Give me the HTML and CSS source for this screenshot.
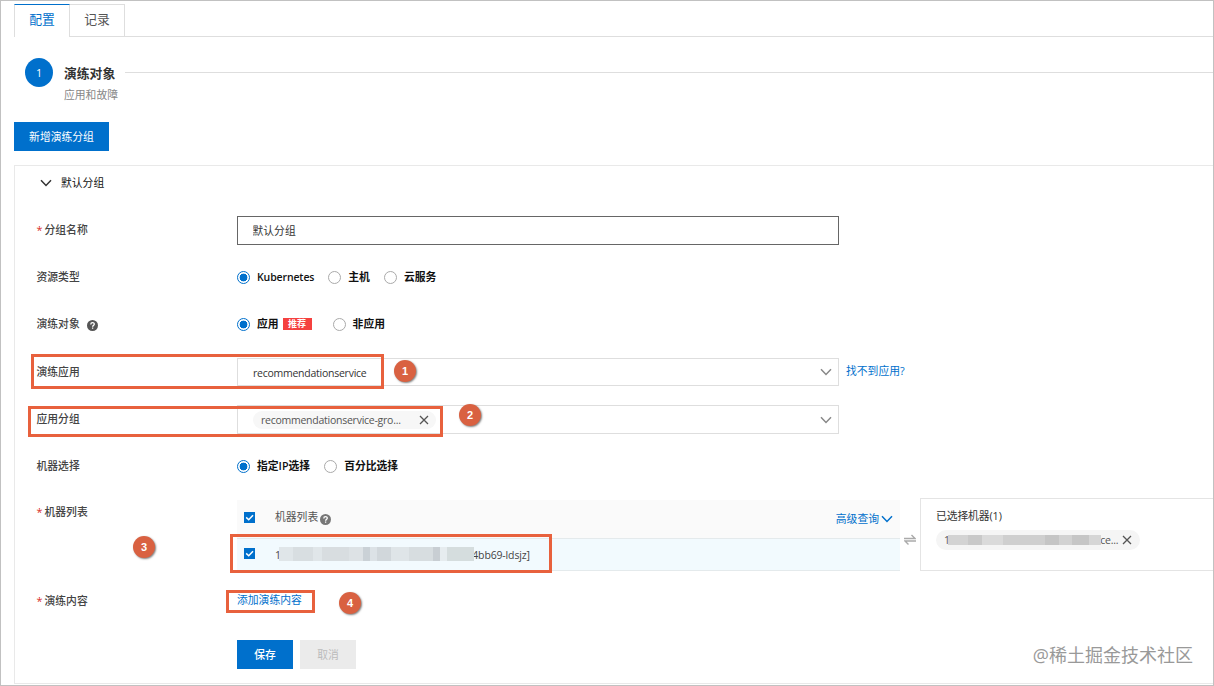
FILE: index.html
```html
<!DOCTYPE html>
<html lang="zh-CN">
<head>
    <meta charset="UTF-8">
    <meta name="viewport" content="width=device-width, initial-scale=1.0">
    <title>演练配置</title>
    <link rel="stylesheet" href="styles.css">
</head>
<body>
    <div class="page">
        <div class="tabs">
            <div class="tab active">配置</div>
            <div class="tab">记录</div>
            <div class="tabs-rest"></div>
        </div>

        <div class="step">
            <div class="step-number">1</div>
            <div class="step-body">
                <div class="step-head">
                    <span class="step-title">演练对象</span>
                    <span class="step-line"></span>
                </div>
                <div class="step-desc">应用和故障</div>
            </div>
        </div>

        <button type="button" class="btn btn-primary btn-add">新增演练分组</button>

        <div class="panel">
            <div class="panel-header">
                <svg class="arrow" width="12" height="8" viewBox="0 0 12 8"><path d="M1 1.2 6 6.4 11 1.2" /></svg>
                <span>默认分组</span>
            </div>

            <form>
                <div class="form-row">
                    <div class="label"><i>*</i>分组名称</div>
                    <input type="text" class="text-input" value="默认分组">
                </div>
                <div class="form-row">
                    <div class="label">资源类型</div>
                    <div class="radios">
                        <span class="radio checked"></span><b class="latin">Kubernetes</b>
                        <span class="radio"></span><b>主机</b>
                        <span class="radio"></span><b>云服务</b>
                    </div>
                </div>
                <div class="form-row">
                    <div class="label">演练对象
                        <svg class="help" width="11" height="11" viewBox="0 0 11 11"><circle cx="5.5" cy="5.5" r="5.5" /><path d="M3.8 4.4C3.8 2.1 7.3 2.2 7.3 4.3 7.3 5.4 5.6 5.4 5.6 6.7M5.6 7.6V8.8" /></svg>
                    </div>
                    <div class="radios">
                        <span class="radio checked"></span><b class="with-tag">应用</b><span class="tag">推荐</span>
                        <span class="radio"></span><b>非应用</b>
                    </div>
                </div>
                <div class="form-row row-app">
                    <div class="label">演练应用</div>
                    <div class="select select-app">
                        <span class="latin">recommendationservice</span>
                        <svg class="arrow" width="12" height="8" viewBox="0 0 12 8"><path d="M1 1.2 6 6.4 11 1.2" /></svg>
                    </div>
                    <a class="link">找不到应用?</a>
                </div>
                <div class="form-row">
                    <div class="label">应用分组</div>
                    <div class="select">
                        <span class="chip latin">recommendationservice-gro...
                            <svg class="close" width="10" height="10" viewBox="0 0 10 10"><path d="M1 1 9 9M9 1 1 9" /></svg>
                        </span>
                        <svg class="arrow" width="12" height="8" viewBox="0 0 12 8"><path d="M1 1.2 6 6.4 11 1.2" /></svg>
                    </div>
                </div>
                <div class="form-row row-choice">
                    <div class="label">机器选择</div>
                    <div class="radios">
                        <span class="radio checked"></span><b>指定IP选择</b>
                        <span class="radio"></span><b>百分比选择</b>
                    </div>
                </div>
                <div class="form-row row-machines">
                    <div class="label"><i>*</i>机器列表</div>
                    <div class="machine-list">
                        <div class="machine-head">
                            <svg class="checkbox" width="11" height="11" viewBox="0 0 11 11"><rect width="11" height="11" /><path d="M2.2 5.4 4.7 7.8 9 3.2" /></svg>
                            <span>机器列表</span>
                            <svg class="help" width="11" height="11" viewBox="0 0 11 11"><circle cx="5.5" cy="5.5" r="5.5" /><path d="M3.8 4.4C3.8 2.1 7.3 2.2 7.3 4.3 7.3 5.4 5.6 5.4 5.6 6.7M5.6 7.6V8.8" /></svg>
                            <a class="link advanced">高级查询
                                <svg class="arrow" width="12" height="8" viewBox="0 0 12 8"><path d="M1 1.2 6 6.4 11 1.2" /></svg>
                            </a>
                        </div>
                        <div class="machine-item">
                            <svg class="checkbox" width="11" height="11" viewBox="0 0 11 11"><rect width="11" height="11" /><path d="M2.2 5.4 4.7 7.8 9 3.2" /></svg>
                            <span class="latin">1</span>
                            <span class="mask mask-long"></span>
                            <span class="latin pod">4bb69-ldsjz]</span>
                        </div>
                    </div>
                    <svg class="swap" width="12" height="12" viewBox="0 0 12 12"><path d="M0 4.5H11L7.5 1M12 7H1L4.5 10.5" /></svg>
                    <div class="selected">
                        <div class="selected-title">已选择机器(1)</div>
                        <div class="selected-chip latin">
                            <span>1</span>
                            <span class="mask mask-short"></span>
                            <span>ce...</span>
                            <svg class="close" width="10" height="10" viewBox="0 0 10 10"><path d="M1 1 9 9M9 1 1 9" /></svg>
                        </div>
                    </div>
                </div>
                <div class="form-row row-content">
                    <div class="label"><i>*</i>演练内容</div>
                    <a class="link">添加演练内容</a>
                </div>
                <div class="actions">
                    <button type="button" class="btn btn-primary">保存</button>
                    <button type="button" class="btn btn-disabled" disabled>取消</button>
                </div>
            </form>
        </div>

        <!-- annotations over the form -->
        <div class="mark mark-1"></div>
        <div class="mark mark-2"></div>
        <div class="mark mark-3"></div>
        <div class="mark mark-4"></div>
        <div class="badge badge-1">1</div>
        <div class="badge badge-2">2</div>
        <div class="badge badge-3">3</div>
        <div class="badge badge-4">4</div>
        <div class="watermark">@稀土掘金技术社区</div>
    </div>
</body>
</html>
```
FILE: styles.css
```css
* {
    box-sizing: border-box;
}
body {
    margin: 0;
    font-family: "Open Sans", "Noto Sans CJK SC", sans-serif;
    font-size: 10.8px;
    line-height: 16px;
    color: #333;
    background-color: #fff;
}
svg {
    fill: none;
    flex: none;
}
.page {
    position: relative;
    width: 1214px;
    height: 686px;
    padding: 3px 0 0 13px;
    border: 1px solid #c1c1c1;
    overflow: hidden;
}
.latin {
    font-size: 10.5px;
    letter-spacing: -0.25px;
}

/* tabs */
.tabs {
    display: flex;
    height: 33px;
}
.tab {
    width: 55px;
    border: 1px solid #dedede;
    border-left: none;
    text-align: center;
    font-size: 12.8px;
    line-height: 29px;
    color: #555;
}
.tab.active {
    width: 56px;
    border-left: 1px solid #dedede;
    border-top-color: #0070cc;
    border-bottom: none;
    color: #0070cc;
}
.tabs-rest {
    flex: 1;
    border-bottom: 1px solid #dedede;
}

/* step */
.step {
    display: flex;
    margin: 21px 0 0 11px;
    height: 64px;
}
.step-number {
    width: 28px;
    height: 29px;
    border-radius: 50%;
    background-color: #0070cc;
    color: #fff;
    text-align: center;
    line-height: 29px;
}
.step-body {
    flex: 1;
    margin-left: 11px;
}
.step-head {
    display: flex;
    height: 28px;
}
.step-title {
    width: 61px;
    padding-top: 1px;
    font-size: 12.8px;
    font-weight: 600;
    line-height: 28px;
}
.step-line {
    flex: 1;
    height: 15px;
    border-bottom: 1px solid #dedede;
}
.step-desc {
    margin-top: 1px;
    color: #888;
}

/* buttons */
.btn {
    width: 56px;
    height: 29px;
    padding: 0 0 2px;
    border: none;
    font-family: inherit;
    font-size: 10.8px;
    font-weight: 500;
}
.btn-primary {
    background-color: #0070cc;
    color: #fff;
}
.btn-disabled {
    background-color: #ebebeb;
    color: #bbb;
    font-weight: 400;
}
.btn-add {
    display: block;
    width: 95px;
    font-weight: 400;
}

/* panel */
.panel {
    height: 519px;
    margin-top: 14px;
    padding-left: 22px;
    border: 1px solid #e9e9e9;
    border-right: none;
}
.panel-header {
    display: flex;
    align-items: center;
    gap: 9px;
    height: 34px;
    margin: 0 0 16px 3px;
    color: #111;
}
.arrow path {
    stroke: #888;
    stroke-width: 1.5;
}
.panel-header .arrow path {
    stroke: #333;
}

/* form */
.form-row {
    display: flex;
    align-items: center;
    height: 29px;
    margin-bottom: 18px;
}
.label {
    display: flex;
    align-items: center;
    width: 200.5px;
    margin-left: -0.5px;
    padding-bottom: 2px;
    font-weight: 500;
    color: #444;
}
.label i {
    width: 8px;
    font-style: normal;
    color: #d93026;
}
.help circle {
    fill: #555;
}
.help path {
    stroke: #fff;
    stroke-width: 1.3;
}
.label .help {
    margin: 3px 0 0 7px;
}
.text-input {
    width: 602px;
    height: 29px;
    padding: 0 15px 1px 14.5px;
    border: 1px solid #666;
    font-family: inherit;
    font-size: 10.8px;
    color: #333;
}
.radios {
    display: flex;
    align-items: center;
    padding-bottom: 1px;
    color: #111;
}
.radios b {
    margin: 0 14px 0 7px;
    font-weight: 600;
}
.radios .latin {
    letter-spacing: -0.12px;
}
.radios .with-tag {
    margin-right: 4px;
}
.radio {
    width: 13px;
    height: 13px;
    border: 1px solid #aaa;
    border-radius: 50%;
}
.radio.checked {
    border-color: #0070cc;
    background: radial-gradient(circle, #0070cc 3.6px, #fff 4.2px);
}
.tag {
    width: 29px;
    height: 12px;
    margin-right: 21px;
    background-color: #f5413f;
    color: #fff;
    font-size: 9px;
    font-weight: 700;
    line-height: 12px;
    text-align: center;
}
.select {
    display: flex;
    align-items: center;
    justify-content: space-between;
    width: 602px;
    height: 29px;
    padding: 0 6px 0 15px;
    border: 1px solid #dedede;
}
.row-app {
    margin-bottom: 19px;
}
.row-app .label,
.row-content .label {
    padding-bottom: 0;
}
.select-app {
    height: 28px;
    margin-top: 1px;
}
.select-app span {
    padding-top: 2px;
}
.chip {
    display: flex;
    align-items: center;
    justify-content: space-between;
    width: 183px;
    height: 18px;
    padding: 0 7px 0 8px;
    border-radius: 9px;
    background-color: #f7f7f7;
    color: #555;
}
.close path {
    stroke: #555;
    stroke-width: 1.3;
}
.link {
    padding-bottom: 1px;
    color: #0070cc;
}
.row-app .link {
    margin-left: 7px;
}
.row-choice {
    margin-bottom: 17px;
}

/* machines */
.row-machines {
    align-items: flex-start;
    height: 73px;
    margin-bottom: 15px;
}
.row-machines .label {
    padding-top: 6px;
}
.machine-list {
    width: 663px;
    margin-top: 2px;
}
.machine-head {
    display: flex;
    align-items: center;
    height: 38px;
    padding: 0 7px 4px;
    background-color: #fafafa;
    color: #555;
}
.machine-head .checkbox,
.machine-item .checkbox {
    margin-right: 20px;
}
.machine-head .help {
    margin: 4px 0 0 2px;
}
.machine-head .help circle {
    fill: #777;
}
.checkbox rect {
    fill: #0070cc;
}
.checkbox path {
    stroke: #fff;
    stroke-width: 1.5;
}
.advanced {
    display: flex;
    align-items: center;
    gap: 2px;
    margin-left: auto;
    padding: 4px 0 0;
}
.advanced .arrow path {
    stroke: #0070cc;
}
.machine-item {
    display: flex;
    align-items: center;
    height: 33px;
    padding: 0 7px 2px;
    border: solid #e4eaec;
    border-width: 1px 0;
    background-color: #f2fafe;
    color: #444;
}
.machine-item .latin {
    padding-top: 2px;
}

/* hidden host names */
.mask {
    position: relative;
    z-index: 1;
}
.mask-long {
    width: 195px;
    height: 14px;
    margin: 1px -2px 0 -1.5px;
    background: linear-gradient(90deg, #e0e6e9 0 14px, #d8dee1 14px 34px, #e0e6e9 34px 43px, #d8dde0 43px 70px, #dde2e5 70px 84px, #cad1d6 84px 91px, #dce2e6 91px 98px, #d1d7db 98px 112px, #dfe5e8 112px 130px, #d7dde0 130px 154px, #c8ced3 154px 161px, #e6ecef 161px 168px, #d5ddde 168px);
}
.machine-item .pod {
    letter-spacing: -0.15px;
}
.swap {
    margin: 36px 4px 0;
}
.swap path {
    stroke: #aaa;
    stroke-width: 1.4;
}
.selected {
    flex: 1;
    height: 73px;
    padding: 9px 15px;
    border: 1px solid #e4e4e4;
    border-right: none;
}
.selected-title {
    letter-spacing: -0.1px;
}
.selected-chip {
    display: flex;
    align-items: center;
    width: 204px;
    height: 20px;
    margin-top: 6px;
    padding: 0 8px;
    border-radius: 10px;
    background-color: #f5f5f5;
    color: #555;
}
.mask-short {
    width: 153px;
    height: 10px;
    margin: 0 -1px 0 -1.5px;
    background: linear-gradient(90deg, #d3d3d3 0 20px, #c9c9c9 20px 34px, #dadada 34px 55px, #cfcfcf 55px 97px, #c5c5c5 97px 111px, #d2d2d2 111px 124px, #c6c6c6 124px 141px, #d6d6d6 141px);
}
.selected-chip .close {
    margin-left: auto;
}

.row-content {
    margin-bottom: 25px;
}
.actions {
    display: flex;
    gap: 7px;
    margin-left: 200px;
}

/* annotations */
.mark {
    position: absolute;
    border: 3px solid #e8613d;
}
.mark-1 {
    left: 30px;
    top: 353px;
    width: 353px;
    height: 35px;
}
.mark-2 {
    left: 27px;
    top: 405px;
    width: 415px;
    height: 31px;
}
.mark-3 {
    left: 229px;
    top: 533px;
    width: 322px;
    height: 39px;
}
.mark-4 {
    left: 225px;
    top: 589px;
    width: 89px;
    height: 23px;
}
.badge {
    position: absolute;
    width: 22px;
    height: 22px;
    border-radius: 50%;
    background-color: #d96141;
    box-shadow: 1px 1px 2px rgba(0, 0, 0, 0.5);
    color: #fff;
    font-family: "Liberation Sans", sans-serif;
    font-size: 11px;
    font-weight: 700;
    line-height: 22px;
    text-align: center;
}
.badge-1 {
    left: 393px;
    top: 359px;
}
.badge-2 {
    left: 458px;
    top: 403px;
}
.badge-3 {
    left: 132px;
    top: 535px;
}
.badge-4 {
    left: 338px;
    top: 591px;
}
.watermark {
    position: absolute;
    right: 20px;
    bottom: 17px;
    font-size: 18px;
    line-height: 26px;
    color: #999;
}
```
